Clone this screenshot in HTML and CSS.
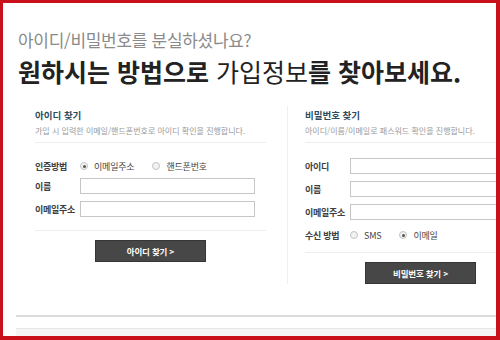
FILE: index.html
```html
<!DOCTYPE html>
<html lang="ko">
<head>
    <meta charset="UTF-8">
    <title>아이디/비밀번호 찾기</title>
    <link rel="stylesheet" href="styles.css">
</head>
<body>
    <div class="frame">
        <div class="intro">
            <p class="lead">아이디/비밀번호를 분실하셨나요?</p>
            <h1 class="title"><strong>원하시는 방법으로</strong> 가입정보<strong>를 찾아보세요.</strong></h1>
        </div>

        <div class="panels">
            <section class="panel">
                <div class="panel-head">
                    <h2>아이디 찾기</h2>
                    <p>가입 시 입력한 이메일/핸드폰번호로 아이디 확인을 진행합니다.</p>
                </div>
                <div class="fields fields-id">
                    <div class="row row-radio">
                        <span class="label">인증방법</span>
                        <span class="choice"><span class="radio checked"></span>이메일주소</span>
                        <span class="choice"><span class="radio"></span>핸드폰번호</span>
                    </div>
                    <div class="row">
                        <span class="label">이름</span>
                        <span class="input"></span>
                    </div>
                    <div class="row">
                        <span class="label">이메일주소</span>
                        <span class="input"></span>
                    </div>
                </div>
                <div class="actions">
                    <button type="button">아이디 찾기 &gt;</button>
                </div>
            </section>

            <section class="panel panel-pw">
                <div class="panel-head">
                    <h2>비밀번호 찾기</h2>
                    <p>아이디/이름/이메일로 패스워드 확인을 진행합니다.</p>
                </div>
                <div class="fields fields-pw">
                    <div class="row">
                        <span class="label">아이디</span>
                        <span class="input wide"></span>
                    </div>
                    <div class="row">
                        <span class="label">이름</span>
                        <span class="input wide"></span>
                    </div>
                    <div class="row">
                        <span class="label">이메일주소</span>
                        <span class="input wide"></span>
                    </div>
                    <div class="row">
                        <span class="label">수신 방법</span>
                        <span class="choice"><span class="radio"></span>SMS</span>
                        <span class="choice"><span class="radio checked"></span>이메일</span>
                    </div>
                </div>
                <div class="actions">
                    <button type="button">비밀번호 찾기 &gt;</button>
                </div>
            </section>
        </div>

        <div class="bottom-rule"></div>
        <div class="bottom-box"></div>
    </div>
</body>
</html>
```

FILE: styles.css
```css
body {
    margin: 0;
    font-family: "Noto Sans CJK KR", "Noto Sans", sans-serif;
    background-color: #ffffff;
}

.frame {
    width: 500px;
    height: 340px;
    box-sizing: border-box;
    border: solid #c8111a;
    border-width: 3px 4px 4px 3px;
    overflow: hidden;
}

.intro {
    padding: 26px 0 0 15px;
}

.lead {
    margin: 0;
    font-size: 17px;
    line-height: 22px;
    color: #8a8a8a;
    letter-spacing: -0.3px;
}

.title {
    margin: 4px 0 0;
    font-size: 25px;
    line-height: 32px;
    font-weight: 400;
    color: #222222;
    white-space: nowrap;
}

.title strong {
    font-weight: 700;
}

.panels {
    display: flex;
    margin-top: 19px;
    padding-left: 32px;
}

.panel {
    width: 231px;
    flex-shrink: 0;
    margin-right: 21px;
}

.panel-pw {
    border-left: 1px solid #efefef;
    padding-left: 17px;
    margin-right: 0;
}

.panel-head {
    padding: 2px 0 5px;
    border-bottom: 1px solid #eeeeee;
}

.panel-head h2 {
    margin: 0;
    font-size: 9.5px;
    line-height: 14px;
    font-weight: 700;
    color: #2d4b5c;
}

.panel-head p {
    margin: 3px 0 0;
    font-size: 8px;
    line-height: 12px;
    color: #9a9a9a;
    white-space: nowrap;
}

.fields {
    display: flex;
    flex-direction: column;
    gap: 7px;
    padding: 15px 0 9px;
    border-bottom: 1px solid #eeeeee;
}

.fields-id {
    padding-bottom: 13px;
}

.fields-id .row-radio {
    margin-bottom: -3px;
}

.row {
    display: flex;
    align-items: center;
    height: 16px;
    font-size: 9px;
    color: #333333;
    white-space: nowrap;
}

.label {
    width: 45px;
    flex-shrink: 0;
    font-weight: 700;
    color: #404040;
    letter-spacing: -0.3px;
}

.choice {
    display: flex;
    align-items: center;
    margin-right: 18px;
    color: #444444;
    letter-spacing: -0.2px;
}

.radio {
    width: 8px;
    height: 8px;
    box-sizing: border-box;
    border: 1px solid #c4c4c4;
    border-radius: 50%;
    background: #f2f2f2;
    margin-right: 6px;
    display: flex;
    align-items: center;
    justify-content: center;
}

.radio.checked::after {
    content: "";
    width: 3px;
    height: 3px;
    border-radius: 50%;
    background: #555555;
}

.input {
    width: 175px;
    height: 16px;
    box-sizing: border-box;
    border: 1px solid #c6c6c6;
    background: #ffffff;
}

.input.wide {
    width: 190px;
    flex-shrink: 0;
}

.actions {
    display: flex;
    justify-content: center;
    padding-top: 9px;
}

button {
    width: 111px;
    height: 22px;
    background-color: #474747;
    border: 1px solid #363636;
    color: #ffffff;
    font-family: inherit;
    font-size: 8.5px;
    font-weight: 700;
    letter-spacing: -0.2px;
    cursor: pointer;
}

.bottom-rule {
    margin: 31px 0 0 13px;
    height: 2px;
    background: #dddddd;
}

.bottom-box {
    margin: 11px 0 0 13px;
    height: 20px;
    background: #f5f5f5;
    border-top: 1px solid #e8e8e8;
}
```
